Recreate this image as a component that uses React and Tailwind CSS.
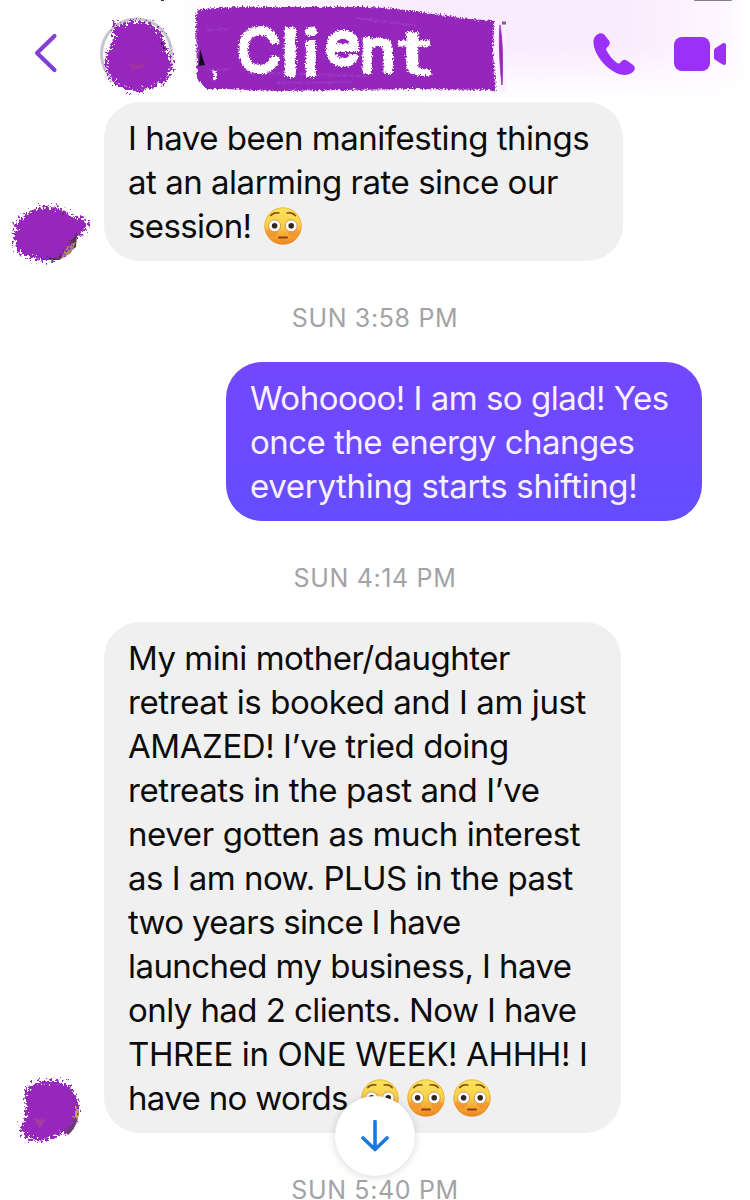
import clsx from "clsx";

const messages = [
  {
    id: 1,
    lines: [
      { text: "I have been manifesting things", track: "tracking-[-0.48px]" },
      { text: "at an alarming rate since our", track: "tracking-[-0.48px]" },
      { text: "session!", track: "tracking-[-0.6px]", emojis: 1 },
    ],
  },
  {
    id: 2,
    mine: true,
    time: "SUN 3:58 PM",
    lines: [
      { text: "Wohoooo! I am so glad! Yes", track: "tracking-[-0.5px]" },
      { text: "once the energy changes", track: "tracking-[-0.54px]" },
      { text: "everything starts shifting!", track: "tracking-[-0.32px]" },
    ],
  },
  {
    id: 3,
    time: "SUN 4:14 PM",
    lines: [
      { text: "My mini mother/daughter", track: "tracking-[-0.48px]" },
      { text: "retreat is booked and I am just", track: "tracking-[-0.41px]" },
      { text: "AMAZED! I’ve tried doing", track: "tracking-[-0.43px]" },
      { text: "retreats in the past and I’ve", track: "tracking-[-0.42px]" },
      { text: "never gotten as much interest", track: "tracking-[-0.38px]" },
      { text: "as I am now. PLUS in the past", track: "tracking-[-0.52px]" },
      { text: "two years since I have", track: "tracking-[-0.66px]" },
      { text: "launched my business, I have", track: "tracking-[-0.56px]" },
      { text: "only had 2 clients. Now I have", track: "tracking-[-0.57px]" },
      { text: "THREE in ONE WEEK! AHHH! I", track: "tracking-[-0.37px]" },
      { text: "have no words", track: "tracking-[-0.65px]", emojis: 3 },
    ],
  },
];

// shared filters and gradients used by the other drawings
const SvgDefs = () => (
  <svg className="absolute h-0 w-0" aria-hidden="true">
    <defs>
      <filter id="rough" x="-20%" y="-20%" width="140%" height="140%">
        <feTurbulence type="fractalNoise" baseFrequency="0.38" numOctaves="3" seed="4" />
        <feDisplacementMap in="SourceGraphic" scale="17" xChannelSelector="R" yChannelSelector="G" />
        <feGaussianBlur stdDeviation="0.7" />
      </filter>
      <filter id="chalk" x="-10%" y="-10%" width="120%" height="120%">
        <feTurbulence type="fractalNoise" baseFrequency="0.6" numOctaves="2" seed="8" />
        <feDisplacementMap in="SourceGraphic" scale="6" xChannelSelector="R" yChannelSelector="G" />
        <feGaussianBlur stdDeviation="0.4" />
      </filter>
      <linearGradient id="face" x1="0" y1="0" x2="0" y2="1">
        <stop offset="0" stopColor="#fbe35c" />
        <stop offset="0.45" stopColor="#fbd24a" />
        <stop offset="1" stopColor="#ee8420" />
      </linearGradient>
      <linearGradient id="chevron" x1="0" y1="0" x2="0" y2="1">
        <stop offset="0" stopColor="#8a3fd0" />
        <stop offset="1" stopColor="#7a3fd8" />
      </linearGradient>
    </defs>
  </svg>
);

const Flushed = () => (
  <svg viewBox="0 0 38 38" className="h-[38px] w-[38px] shrink-0" role="img" aria-label="😳">
    <circle cx="19" cy="19" r="18.6" fill="url(#face)" />
    <circle cx="19" cy="19" r="18.2" fill="none" stroke="#d98a1c" strokeOpacity="0.5" strokeWidth="0.9" />
    <ellipse cx="8" cy="25.5" rx="6" ry="4" fill="#f0742c" opacity="0.35" />
    <ellipse cx="30" cy="25.5" rx="6" ry="4" fill="#f0742c" opacity="0.35" />
    <path d="M6.8 8.6c2-2.4 5-3.2 8-2.6M31.2 8.6c-2-2.4-5-3.2-8-2.6" fill="none" stroke="#7a4c10" strokeWidth="1.6" strokeLinecap="round" />
    <circle cx="10.6" cy="18.8" r="6" fill="#fff" stroke="#c79a4c" strokeWidth="1" />
    <circle cx="27.2" cy="18.8" r="6" fill="#fff" stroke="#c79a4c" strokeWidth="1" />
    <circle cx="10.6" cy="18.8" r="2.8" fill="#33241c" />
    <circle cx="27.2" cy="18.8" r="2.8" fill="#33241c" />
    <path d="M15 30.4h8" stroke="#8f3e12" strokeWidth="2" strokeLinecap="round" />
  </svg>
);

const HeaderAvatar = () => (
  <svg viewBox="0 0 80 84" className="ml-[39px] h-[84px] w-20 shrink-0 overflow-visible">
    <circle cx="39.5" cy="40" r="35" fill="#fff" stroke="#c3c6cb" strokeWidth="3" />
    <path d="M55 17l9 8 5 11-8-2z" fill="#2a1230" />
    <path
      d="M17 8l6 4c9-6 23-7 33 0 7 5 10 10 11 19 7 10 9 18 7 26-1 13-14 12-22 18-12 4-22 3-30-3-10-7-15-17-13-29 3-9 6-15 8-21z"
      fill="#9727bd"
      filter="url(#rough)"
    />
    <path d="M32 48l8 3 10-4-4 7-11 2z" fill="#a3398f" opacity="0.7" filter="url(#chalk)" />
  </svg>
);

const NameBanner = () => (
  <svg viewBox="0 0 320 96" className="ml-[10px] h-24 w-80 shrink-0">
    <path
      d="M11 9l40-2 128 0c45 1 80 11 118 13l10 1-1 30 3 40-8-1-75-1-133 2c-25 0-40-2-74-2l-9-11-1-62z"
      fill="#9528bb"
      filter="url(#chalk)"
    />
    <path d="M13 49l5 16-6 1z" fill="#160a1c" />
    <path d="M170 18l60 8M20 30l22-1M22 70l22-1M60 73l120 3M90 83l75-1" stroke="#a94bcb" strokeWidth="1.5" opacity="0.5" filter="url(#chalk)" />
    <path d="M26 71l3 4-2 5" fill="none" stroke="#fff" strokeWidth="2.5" filter="url(#chalk)" />
    <path d="M311 20h7c1.5 18 1 45 .5 72h-5z" fill="#f9eafe" />
    <path d="M313 25c2.5 16 3.500 38 2 60-2-16-3.500-42-2-60z" fill="#9528bb" stroke="#9528bb" strokeWidth="0.8" />
    <path d="M309.5 20c-2 26 0 50 4 72" fill="none" stroke="#fcf3ff" strokeWidth="3" />
    <path d="M317 21v70" stroke="#fcf3ff" strokeWidth="1.5" />
    <path d="M315 21.5h4v3h-4z" fill="#8a5a9c" />
    <g
      fill="#fff"
      stroke="#fff"
      strokeLinejoin="round"
      filter="url(#chalk)"
      className="font-['Inter',sans-serif] text-[60px] font-normal"
    >
      <text strokeWidth="4">
        <tspan x="50" y="72">C</tspan>
        <tspan x="96" y="74" strokeWidth="6">l</tspan>
        <tspan x="138" y="65">e</tspan>
        <tspan x="173" y="72">n</tspan>
      </text>
      <text transform="translate(114 76) scale(1.35 1.08)" strokeWidth="2">i</text>
      <text transform="translate(211 75) scale(1.75 1.05)" strokeWidth="1.5">t</text>
    </g>
  </svg>
);

const Header = () => (
  <header className="flex h-[102px] items-start bg-[linear-gradient(to_bottom,transparent_0%,transparent_45%,#fff_98%),linear-gradient(to_right,#fff_22%,#f9eafe_60%,#faecfe_84%,#fdf7ff_97%,#fff_100%)]">
    <svg viewBox="0 0 26 42" className="mt-8 ml-8 h-[42px] w-[26px] shrink-0">
      <path d="M22.5 4L5 21l17.5 17" fill="none" stroke="url(#chevron)" strokeWidth="4.2" strokeLinecap="round" strokeLinejoin="round" />
    </svg>
    <div className="flex pt-[14px]">
      <HeaderAvatar />
    </div>
    <NameBanner />
    <svg viewBox="0 0 42 42" className="mt-[33px] ml-[86px] h-[42px] w-[42px] shrink-0">
      <path
        d="M6.5 0.5C3 1.5 0 5 0.5 10c1 10 7.5 19 15.5 25.5 6 4.7 13 7.5 19 6 4-1 7-4 6.8-6.5-.1-2-1.5-3-3-4l-5-3.6c-1.8-1.2-3.5-.8-5 .6l-2 2c-1 .8-2 .6-3-.2-4-3-8-8-10.3-12.3-.6-1-.4-2 .5-3l1.5-1.5c1.5-1.5 1.7-3.5.6-5.2L12 2.5C10.5.5 8.5 0 6.5.5z"
        fill="#9b30fb"
      />
    </svg>
    <svg viewBox="0 0 54 36" className="mt-9 ml-[38px] h-9 w-[54px] shrink-0">
      <rect x="1" y="1" width="36" height="34" rx="8" fill="#9b30fb" />
      <path d="M41 14.5c0-1 .5-2 1.5-2.6l7-4.5c1.8-1 3.5-.3 3.5 1.8v17.6c0 2.1-1.7 2.8-3.5 1.8l-7-4.5c-1-.6-1.5-1.6-1.5-2.6z" fill="#9b30fb" />
    </svg>
  </header>
);

const WideBlob = () => (
  <svg viewBox="0 0 90 70" className="h-[70px] w-[90px] overflow-visible">
    <path d="M60 17l14 11-2 24-17 13-18 0 0-38z" fill="#57344a" />
    <path d="M62 51l10-4-5 11-10 6z" fill="#a58a63" />
    <path
      d="M13 27c8-9 18-15 32-15 10 0 16 3 20 10 7 0 14 1 19 6-2 8-8 13-16 14-2 10-6 18-17 22-14 3-25-1-36-6-6-9-7-22-2-31z"
      fill="#9727bd"
      filter="url(#rough)"
    />
  </svg>
);

const RoundBlob = () => (
  <svg viewBox="0 0 90 76" className="h-[76px] w-[90px] overflow-visible">
    <path d="M60 14c10 6 15 16 15 27-1 9-4 17-11 23l-20-20z" fill="#6c4066" />
    <path d="M71 33l4 6-1 9-6-2z" fill="#c79a72" />
    <path
      d="M25 14c12-4 24-6 35-2 9 6 14 14 13 26-2 12-6 19-13 23-9 7-23 11-32 8-7-3-12-6-12-11 4-7 6-14 6-20-2-9-1-18 3-24z"
      fill="#9727bd"
      filter="url(#rough)"
    />
    <path d="M29 44l5 5 7-1-3 8-6-4z" fill="#a9518f" opacity="0.6" filter="url(#chalk)" />
  </svg>
);

const TimeStamp = ({ children, className }) => (
  <p className={clsx("text-center text-[25px] leading-[30px] tracking-[0.65px] text-[#a3a3a6]", className)}>
    {children}
  </p>
);

const Bubble = ({ lines, mine, className }) => (
  <div
    className={clsx(
      "rounded-[36px] pt-[14px] pb-[13px] pl-6",
      mine ? "bg-linear-to-b from-[#7347ff] to-[#654dff] text-[#f8f0ff]" : "bg-[#f0f0f0] text-[#0c0c0c]",
      className,
    )}
  >
    {lines.map(({ text, track, emojis = 0 }) => (
      <div key={text} className="flex h-11 items-center gap-[13px] whitespace-nowrap">
        <span className={clsx("text-[33px] leading-[44px]", track)}>{text}</span>
        {emojis > 0 && (
          <span className="flex gap-2">
            {Array.from({ length: emojis }, (_, i) => (
              <Flushed key={i} />
            ))}
          </span>
        )}
      </div>
    ))}
  </div>
);

const App = () => {
  const [first, reply, last] = messages;

  return (
    <div className="relative h-[1200px] w-[750px] overflow-hidden bg-white font-['Inter','Liberation_Sans',sans-serif]">
      <SvgDefs />
      <div className="absolute top-0 left-[694px] h-px w-[38px] rounded-b bg-[#8b7b8f]" />
      <div className="absolute top-0 left-[161px] h-px w-[3px] bg-[#333]" />
      <Header />
      <main>
        <div className="flex items-end">
          <div className="-mb-1 w-[104px] pl-1">
            <WideBlob />
          </div>
          <Bubble lines={first.lines} className="w-[519px]" />
        </div>
        <TimeStamp className="mt-[42px]">{reply.time}</TimeStamp>
        <div className="mt-[29px] flex justify-end pr-12">
          <Bubble lines={reply.lines} mine className="w-[476px]" />
        </div>
        <TimeStamp className="mt-[42px]">{last.time}</TimeStamp>
        <div className="mt-[29px] flex items-end">
          <div className="-mb-[14px] w-[104px] pl-1">
            <RoundBlob />
          </div>
          <Bubble lines={last.lines} className="w-[517px]" />
        </div>
        <TimeStamp className="mt-[42px]">SUN 5:40 PM</TimeStamp>
      </main>
      <button
        type="button"
        aria-label="Scroll to latest"
        className="absolute top-[1096px] left-[335px] flex h-20 w-20 items-center justify-center rounded-full bg-white shadow-[0_1px_8px_rgba(0,0,0,0.16)]"
      >
        <svg viewBox="0 0 28 32" className="h-8 w-7">
          <path d="M14 1.5v28M2 18l12 11.5L26 18" fill="none" stroke="#1c78dc" strokeWidth="3.6" strokeLinecap="round" strokeLinejoin="round" />
        </svg>
      </button>
    </div>
  );
};

export default App;
